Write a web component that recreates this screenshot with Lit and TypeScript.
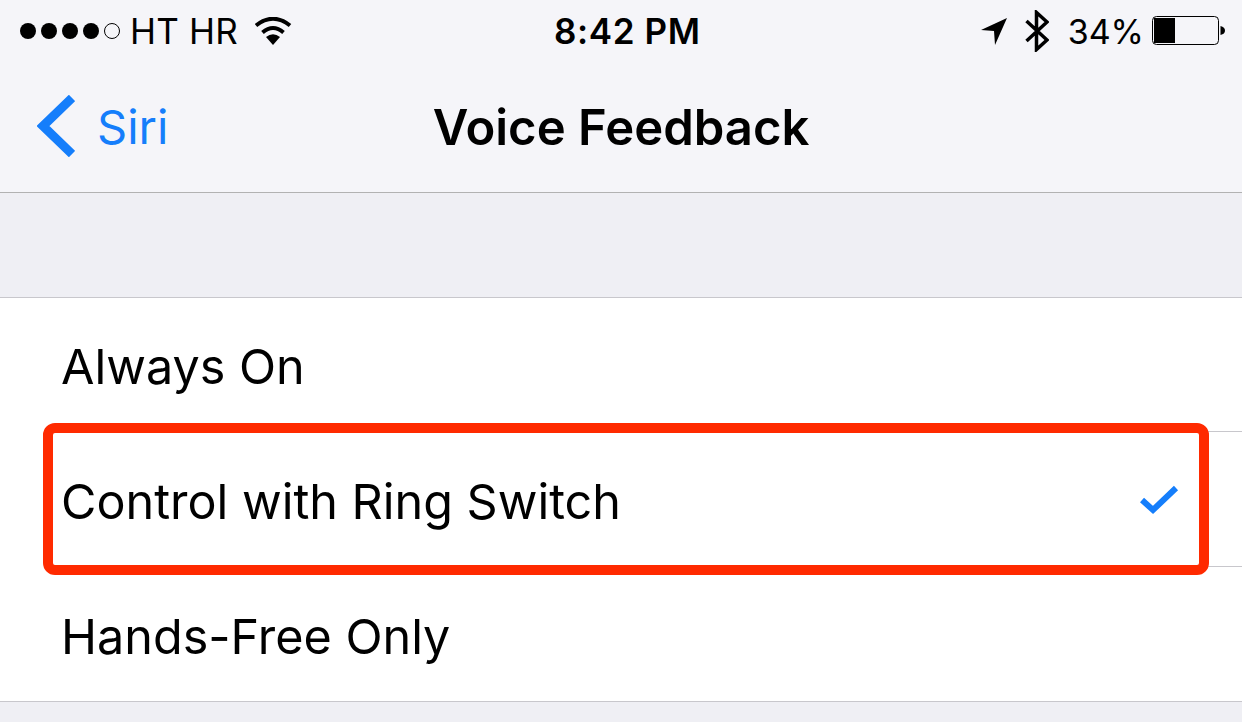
import { LitElement, html, css, svg } from "lit";
import { customElement } from "lit/decorators.js";

const rows = [
  { label: "Always On", checked: false },
  { label: "Control with Ring Switch", checked: true },
  { label: "Hands-Free Only", checked: false },
];

@customElement("app-root")
export class AppRoot extends LitElement {
  static styles = css`
    :host {
      display: block;
      position: relative;
      width: 1242px;
      height: 722px;
      overflow: hidden;
      background: #efeff4;
      font-family: Inter, "Liberation Sans", sans-serif;
      color: #000;
    }
    .header {
      height: 193px;
      box-sizing: border-box;
      background: #f5f5f9;
      border-bottom: 1px solid #b2b2b2;
      display: flex;
      flex-direction: column;
    }
    .status {
      height: 62px;
      display: flex;
      align-items: center;
      justify-content: space-between;
      font-size: 35px;
    }
    .status-left,
    .status-right {
      display: flex;
      align-items: center;
    }
    .status-left {
      padding-left: 20px;
    }
    .dots {
      display: flex;
      gap: 5px;
    }
    .dot {
      width: 16px;
      height: 16px;
      border-radius: 50%;
      background: #000;
      box-sizing: border-box;
    }
    .dot.empty {
      background: none;
      border: 1px solid #000;
    }
    .carrier {
      margin-left: 10px;
      letter-spacing: 0.2px;
    }
    .wifi {
      margin-left: 16px;
    }
    .time {
      font-weight: 600;
      margin-right: 18px;
      letter-spacing: 0.6px;
    }
    .status-right {
      padding-right: 17px;
    }
    .bluetooth {
      margin-left: 18px;
    }
    .pct {
      margin-left: 19px;
      font-size: 34px;
    }
    .battery {
      margin-left: 8px;
    }
    .nav {
      flex: 1;
      display: flex;
      align-items: center;
      justify-content: center;
      position: relative;
    }
    .back {
      position: absolute;
      left: 37px;
      top: 33px;
      display: flex;
      align-items: center;
      color: #157efb;
      font-size: 47px;
      gap: 22px;
    }
    .title {
      font-size: 49px;
      font-weight: 600;
    }
    .list {
      margin-top: 104px;
      background: #fff;
      border-top: 1px solid #c8c7cc;
      border-bottom: 1px solid #c8c7cc;
    }
    .row {
      height: 133px;
      box-sizing: border-box;
      margin-left: 61px;
      padding: 4px 62px 0 0;
      display: flex;
      align-items: center;
      justify-content: space-between;
      font-size: 48.5px;
    }
    .row + .row {
      border-top: 1px solid #c8c7cc;
      height: 135px;
    }
    .highlight {
      position: absolute;
      left: 43px;
      top: 423px;
      width: 1166px;
      height: 152px;
      box-sizing: border-box;
      border: 10px solid #ff2a00;
      border-radius: 12px;
    }
  `;

  private wifiIcon() {
    return html`<svg class="wifi" width="38" height="28" viewBox="0 0 38 28">
      <path d="M19 28 L12 20 Q19 14.500 26 20 Z" fill="#000" />
      <path d="M8.500 15.500 Q19 6.500 29.500 15.500" fill="none" stroke="#000" stroke-width="4" />
      <path d="M2 8.500 Q19 -5 36 8.500" fill="none" stroke="#000" stroke-width="4" />
    </svg>`;
  }

  private battery() {
    return html`<svg class="battery" width="73" height="30" viewBox="0 0 73 30">
      <rect x="0.500" y="0.500" width="66" height="28" rx="4" fill="none" stroke="#000" stroke-width="1" />
      <rect x="2" y="2" width="21" height="25" fill="#000" />
      <path d="M68.500 10 Q73 11 73 14.500 Q73 18 68.500 19 Z" fill="#000" />
    </svg>`;
  }

  private check() {
    return svg`<svg width="40" height="32" viewBox="0 0 40 32">
      <path d="M2 15 L13 25 L36 3" fill="none" stroke="#157efb" stroke-width="6" />
    </svg>`;
  }

  render() {
    return html`
      <div class="header">
        <div class="status">
          <div class="status-left">
            <div class="dots">
              <span class="dot"></span><span class="dot"></span><span class="dot"></span
              ><span class="dot"></span><span class="dot empty"></span>
            </div>
            <span class="carrier">HT HR</span>
            ${this.wifiIcon()}
          </div>
          <span class="time">8:42 PM</span>
          <div class="status-right">
            <svg width="26" height="27" viewBox="0 0 26 27">
              <path d="M0 12 L26 0 L14 27 L13 13 Z" fill="#000" />
            </svg>
            <svg class="bluetooth" width="24" height="42" viewBox="0 0 24 42">
              <path d="M1.500 11 L22 30 L11.500 39.500 L11.500 2.500 L22 12 L1.500 31" fill="none" stroke="#000" stroke-width="3.500" />
            </svg>
            <span class="pct">34%</span>
            ${this.battery()}
          </div>
        </div>
        <div class="nav">
          <div class="back">
            <svg width="38" height="62" viewBox="0 0 38 62">
              <path d="M35 3 L6 31 L35 59" fill="none" stroke="#157efb" stroke-width="9" />
            </svg>
            <span>Siri</span>
          </div>
          <span class="title">Voice Feedback</span>
        </div>
      </div>
      <div class="list">
        ${rows.map(
          (r) => html`<div class="row">
            <span>${r.label}</span>
            ${r.checked ? this.check() : ""}
          </div>`
        )}
      </div>
      <div class="highlight"></div>
    `;
  }
}
